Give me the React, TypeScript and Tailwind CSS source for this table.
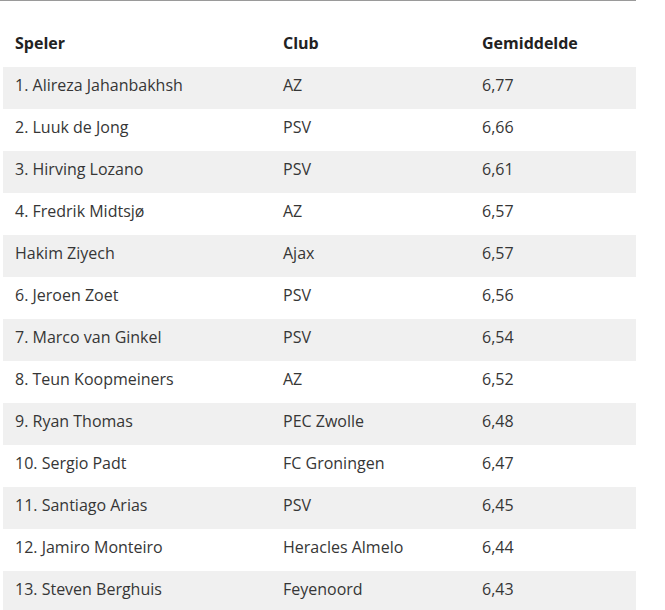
import React from "react";

const rows: [string, string, string][] = [
  ["1. Alireza Jahanbakhsh", "AZ", "6,77"],
  ["2. Luuk de Jong", "PSV", "6,66"],
  ["3. Hirving Lozano", "PSV", "6,61"],
  ["4. Fredrik Midtsjø", "AZ", "6,57"],
  ["Hakim Ziyech", "Ajax", "6,57"],
  ["6. Jeroen Zoet", "PSV", "6,56"],
  ["7. Marco van Ginkel", "PSV", "6,54"],
  ["8. Teun Koopmeiners", "AZ", "6,52"],
  ["9. Ryan Thomas", "PEC Zwolle", "6,48"],
  ["10. Sergio Padt", "FC Groningen", "6,47"],
  ["11. Santiago Arias", "PSV", "6,45"],
  ["12. Jamiro Monteiro", "Heracles Almelo", "6,44"],
  ["13. Steven Berghuis", "Feyenoord", "6,43"],
];

export default function App() {
  return (
    <div
      className="w-[665px] h-[610px] overflow-hidden bg-white"
      style={{ fontFamily: '"Open Sans", "Noto Sans", sans-serif' }}
    >
      <div className="w-[636px] h-px bg-[#9a9a9a]" />
      <div className="ml-[3px] mt-[24px] w-[633px]">
        <div className="grid grid-cols-[268px_199px_166px] h-[42px] pt-[6px] text-[16px] leading-[24px] font-bold text-[#222]">
          <div className="pl-[12px]">Speler</div>
          <div className="pl-[12px]">Club</div>
          <div className="pl-[12px]">Gemiddelde</div>
        </div>
        {rows.map((r, i) => (
          <div
            key={i}
            className={
              "grid grid-cols-[268px_199px_166px] h-[42px] pt-[6px] text-[16px] leading-[24px] text-[#363636] " +
              (i % 2 === 0 ? "bg-[#f0f0f0]" : "bg-white")
            }
          >
            <div className="pl-[12px]">{r[0]}</div>
            <div className="pl-[12px]">{r[1]}</div>
            <div className="pl-[12px]">{r[2]}</div>
          </div>
        ))}
      </div>
    </div>
  );
}
